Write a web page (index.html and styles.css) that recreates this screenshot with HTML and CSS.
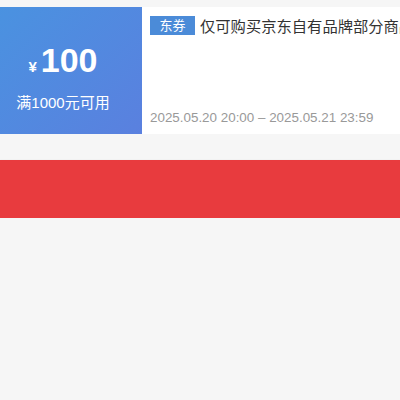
FILE: index.html
```html
<!DOCTYPE html>
<html lang="zh-CN">
<head>
  <meta charset="UTF-8">
  <title>东券</title>
  <link rel="stylesheet" href="styles.css">
</head>
<body>
  <div class="coupon">
    <div class="coupon-value">
      <div class="amount"><span class="currency">¥</span>100</div>
      <div class="limit">满1000元可用</div>
    </div>
    <div class="coupon-info">
      <div class="title-row">
        <span class="tag">东券</span>
        <span class="title">仅可购买京东自有品牌部分商品</span>
      </div>
      <div class="date">2025.05.20 20:00 – 2025.05.21 23:59</div>
    </div>
  </div>

  <div class="action-bar"></div>
</body>
</html>
```

FILE: styles.css
```css
body {
  margin: 0;
  background: #f6f6f6;
  font-family: "Liberation Sans", "Noto Sans CJK SC", sans-serif;
}

.coupon {
  display: flex;
  margin-top: 7px;
  height: 127px;
  background: white;
}

.coupon-value {
  width: 142px;
  flex-shrink: 0;
  box-sizing: border-box;
  padding: 35px 16px 0 0;
  display: flex;
  flex-direction: column;
  align-items: center;
  color: white;
  background: linear-gradient(135deg, #4a92e0 0%, #5a80df 100%);
}

.amount {
  font-size: 34px;
  font-weight: bold;
  line-height: 36px;
}

.currency {
  font-size: 15px;
  margin-right: 4px;
}

.limit {
  font-size: 15px;
  margin-top: 6px;
}

.coupon-info {
  flex: 1;
  min-width: 0;
  padding: 7px 0 7px 8px;
  display: flex;
  flex-direction: column;
  justify-content: space-between;
}

.title-row {
  display: flex;
  align-items: center;
  white-space: nowrap;
  overflow: hidden;
}

.tag {
  flex-shrink: 0;
  width: 45px;
  height: 19px;
  line-height: 19px;
  text-align: center;
  font-size: 13px;
  color: white;
  background: #4b8bd8;
  margin-right: 5px;
}

.title {
  font-size: 15.3px;
  color: #333;
}

.date {
  font-size: 13.4px;
  color: #999;
  margin-bottom: 2px;
}

.action-bar {
  margin-top: 26px;
  height: 58px;
  background: #e83b3e;
  box-shadow: 0 1px 2px rgba(0, 0, 0, 0.25);
}
```
